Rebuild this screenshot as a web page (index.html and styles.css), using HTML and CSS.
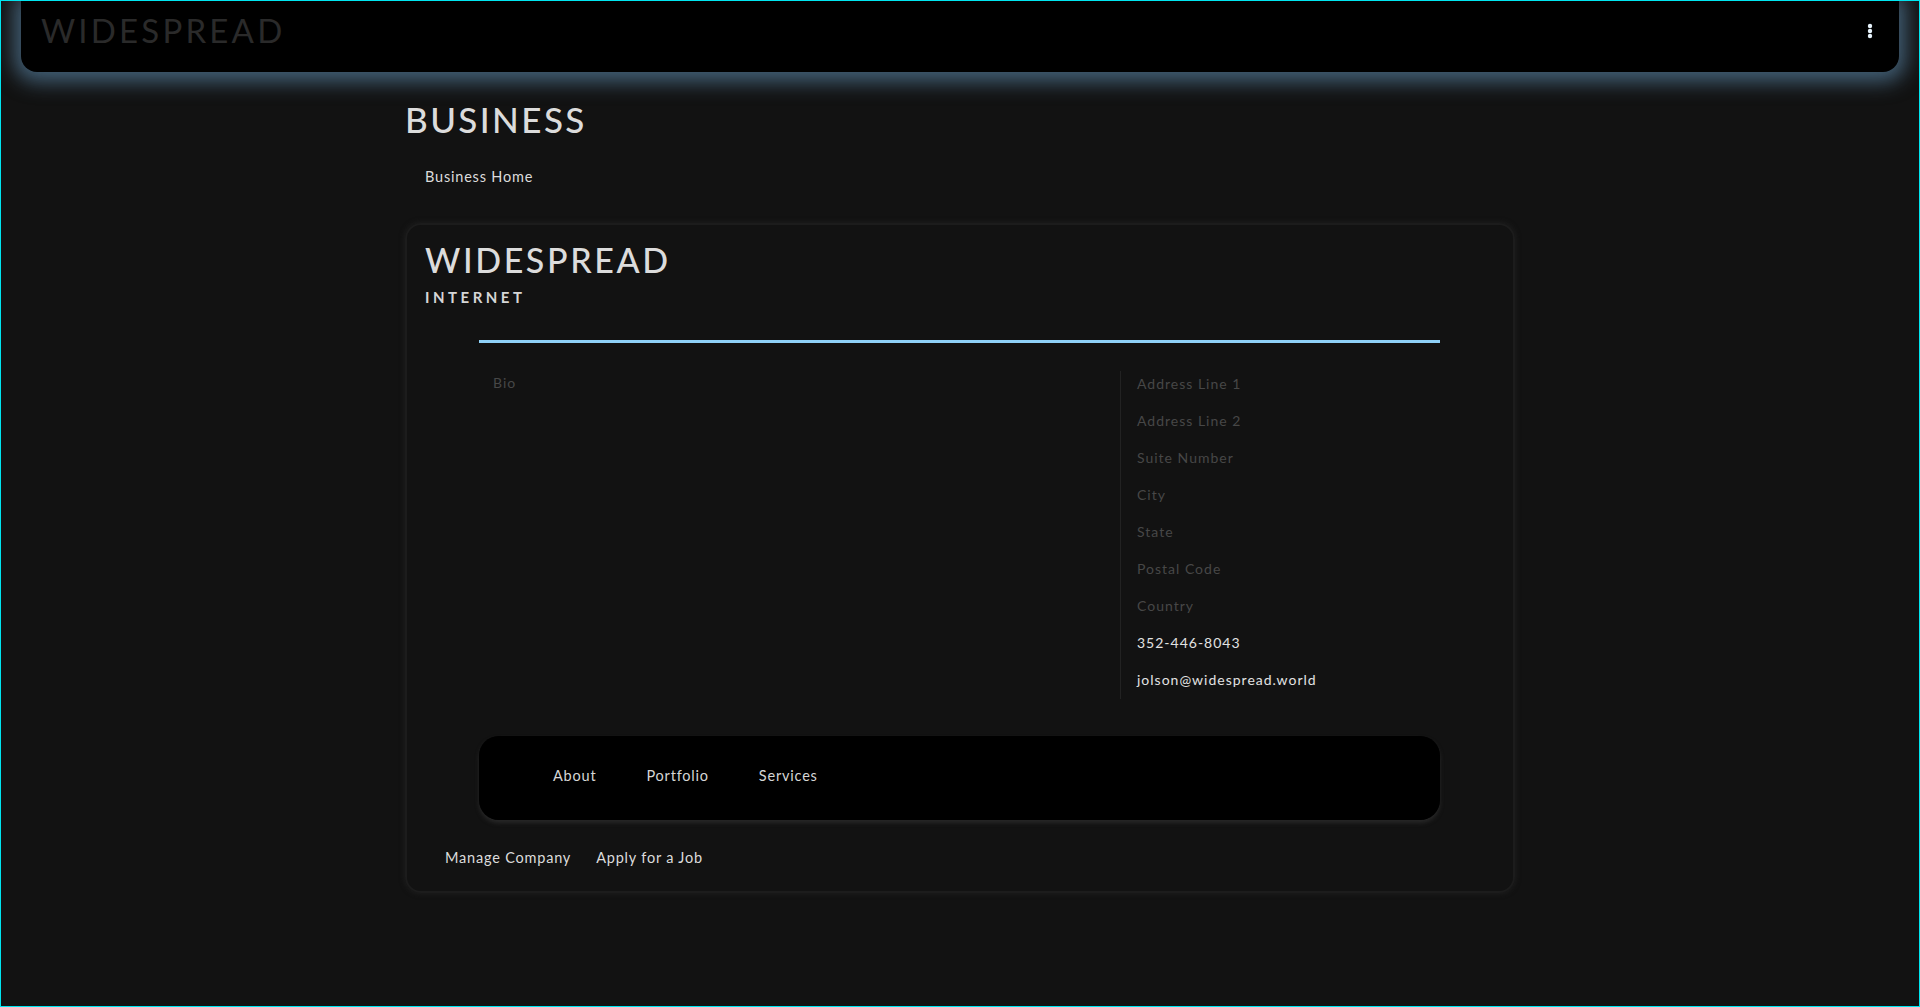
FILE: index.html
```html
<!DOCTYPE html>
<html lang="en">
<head>
<meta charset="utf-8">
<title>Widespread - Business</title>
<link rel="stylesheet" href="styles.css">
</head>
<body>
<div class="frame">
  <header class="topbar">
    <div class="brand">WIDESPREAD</div>
    <button class="kebab" aria-label="menu">
      <svg width="6" height="16" viewBox="0 0 6 16"><circle cx="3" cy="3" r="2.2" fill="#e6f2fb"/><circle cx="3" cy="8" r="2.2" fill="#e6f2fb"/><circle cx="3" cy="13" r="2.2" fill="#e6f2fb"/></svg>
    </button>
  </header>

  <main class="container">
    <h1 class="page-title">BUSINESS</h1>
    <nav class="crumbs"><a href="#">Business Home</a></nav>

    <section class="card">
      <h2 class="biz-name">WIDESPREAD</h2>
      <div class="biz-type">INTERNET</div>

      <div class="inner">
        <div class="rule"></div>
        <div class="details">
          <div class="bio">Bio</div>
          <ul class="address">
            <li class="muted">Address Line 1</li>
            <li class="muted">Address Line 2</li>
            <li class="muted">Suite Number</li>
            <li class="muted">City</li>
            <li class="muted">State</li>
            <li class="muted">Postal Code</li>
            <li class="muted">Country</li>
            <li class="bright">352-446-8043</li>
            <li class="bright">jolson@widespread.world</li>
          </ul>
        </div>
        <nav class="tabs">
          <a href="#">About</a>
          <a href="#">Portfolio</a>
          <a href="#">Services</a>
        </nav>
      </div>

      <div class="actions">
        <a href="#">Manage Company</a>
        <a href="#">Apply for a Job</a>
      </div>
    </section>
  </main>
</div>
</body>
</html>
```

FILE: styles.css
```css
* { box-sizing: border-box; }
html, body { margin: 0; padding: 0; }
body {
  background: #121212;
  font-family: "Lato", "Noto Sans", "Liberation Sans", sans-serif;
  color: #d8d8d8;
}
a { color: inherit; text-decoration: none; }

.frame {
  min-height: 1007px;
  border: 1px solid #00e5f0;
  overflow: hidden;
}

.topbar {
  margin: -1px 20px 0 20px;
  height: 72px;
  background: #000;
  border-radius: 0 0 16px 16px;
  box-shadow: 0 3px 20px 7px rgba(74, 108, 134, 0.85);
  display: flex;
  align-items: center;
  justify-content: space-between;
  padding: 0 26px 0 20px;
  position: relative;
}
.brand {
  font-size: 33px;
  letter-spacing: 3.2px;
  color: #2a2a2a;
  margin-top: -12px;
}
.kebab {
  background: none;
  border: 0;
  padding: 0;
  margin-top: -10px;
  display: flex;
}

.container {
  width: 1110px;
  margin: 0 auto;
}
.page-title {
  margin: 26px 0 0 0;
  font-size: 35px;
  font-weight: 500;
  letter-spacing: 2.4px;
  color: #dcdcdc;
  line-height: 42px;
}
.crumbs {
  margin-top: 26px;
  padding-left: 20px;
  font-size: 14.5px;
  letter-spacing: 0.8px;
  line-height: 22px;
  color: #dcdcdc;
}

.card {
  margin-top: 35px;
  border: 2px solid #1c1c1c;
  border-radius: 16px;
  box-shadow: 0 0 5px 1px rgba(30, 30, 30, 0.9);
  padding: 14px 20px 25px 18px;
}
.biz-name {
  margin: 0;
  font-size: 34px;
  font-weight: 500;
  letter-spacing: 2.6px;
  line-height: 42px;
  color: #dcdcdc;
}
.biz-type {
  margin-top: 6px;
  font-size: 15px;
  font-weight: 700;
  letter-spacing: 3.5px;
  color: #d6d6d6;
  line-height: 20px;
}

.inner {
  margin: 33px 53px 0 54px;
}
.rule {
  height: 3px;
  background: #8fd1f7;
}
.details {
  display: grid;
  grid-template-columns: 641px 1fr;
  margin-top: 28px;
}
.bio {
  padding: 3px 14px;
  font-size: 14px;
  letter-spacing: 1px;
  color: #474747;
}
.address {
  list-style: none;
  margin: 0;
  padding: 0 0 0 16px;
  border-left: 1px solid #222;
}
.address li {
  font-size: 14px;
  letter-spacing: 1px;
  line-height: 20px;
  padding: 1px 0;
  margin-bottom: 15px;
}
.address li:first-child { margin-top: 2px; }
.address li:last-child { margin-bottom: 8px; }
.muted { color: #474747; }
.bright { color: #e2e2e2; }

.tabs {
  margin-top: 37px;
  height: 84px;
  background: #000;
  border-radius: 20px;
  box-shadow: inset 0 0 8px rgba(0,0,0,1), 0 3px 4px rgba(42,42,42,0.9);
  display: flex;
  align-items: center;
  gap: 50px;
  padding: 0 0 5px 74px;
  font-size: 14.5px;
  letter-spacing: 0.8px;
  color: #d6d6d6;
}

.actions {
  margin-top: 29px;
  padding-left: 20px;
  display: flex;
  gap: 25px;
  font-size: 14.5px;
  letter-spacing: 0.8px;
  color: #dcdcdc;
}
```
